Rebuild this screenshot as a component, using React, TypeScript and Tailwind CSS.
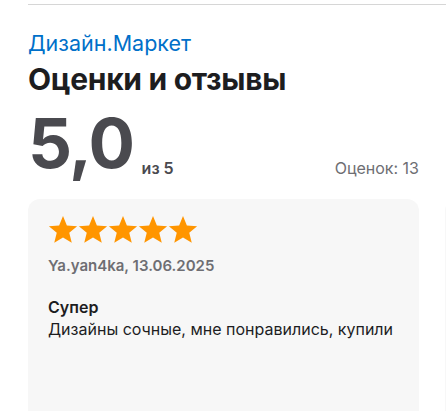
import React from "react";

const Star = () => (
  <svg width="30" height="29" viewBox="0 0 24 23" className="shrink-0">
    <path
      d="M12 0.6l3.1 7.6 8.2 0.6-6.3 5.3 2 8-7-4.3-7 4.3 2-8L0.7 8.8l8.2-0.6z"
      fill="#ff9500"
    />
  </svg>
);

export default function App() {
  return (
    <div
      className="w-[446px] h-[411px] overflow-hidden bg-white"
      style={{ fontFamily: "Inter, 'Noto Sans', sans-serif" }}
    >
      <div className="ml-[28px] mt-[4px] h-px bg-[#d6d6d6]" />
      <div className="pl-[28px] pr-[27px]">
        <div className="mt-[25px] text-[21.5px] leading-[26px] text-[#0070c9]">
          Дизайн.Маркет
        </div>
        <h2 className="mt-[5px] text-[30px] leading-[36px] font-bold text-[#1d1d1f] tracking-[-0.3px]">
          Оценки и отзывы
        </h2>
        <div className="mt-[12px] flex items-end justify-between">
          <div className="flex items-end">
            <span className="text-[69px] leading-[69px] font-bold text-[#4a4a4f] tracking-[-1.5px]">
              5,0
            </span>
            <span className="ml-[8px] text-[16px] leading-[20px] font-semibold text-[#4a4a4f]">
              из 5
            </span>
          </div>
          <span className="text-[16px] leading-[20px] text-[#6e6e73]">Оценок: 13</span>
        </div>
      </div>
      <div className="mt-[21px] flex gap-[26px] pl-[28px]">
        <div className="w-[391px] shrink-0 h-[230px] rounded-[12px] bg-[#f7f7f7] px-[20px] pt-[16px]">
          <div className="flex">
            <Star />
            <Star />
            <Star />
            <Star />
            <Star />
          </div>
          <div className="mt-[13px] text-[15px] leading-[18px] font-semibold text-[#6e6e73]">
            Ya.yan4ka, 13.06.2025
          </div>
          <div className="mt-[21px] text-[16px] leading-[22px] font-semibold text-[#1d1d1f]">
            Супер
          </div>
          <div className="text-[16px] leading-[22px] text-[#1d1d1f]">
            Дизайны сочные, мне понравились, купили
          </div>
        </div>
        <div className="w-[391px] shrink-0 h-[230px] rounded-[12px] bg-[#f7f7f7]" />
      </div>
    </div>
  );
}
